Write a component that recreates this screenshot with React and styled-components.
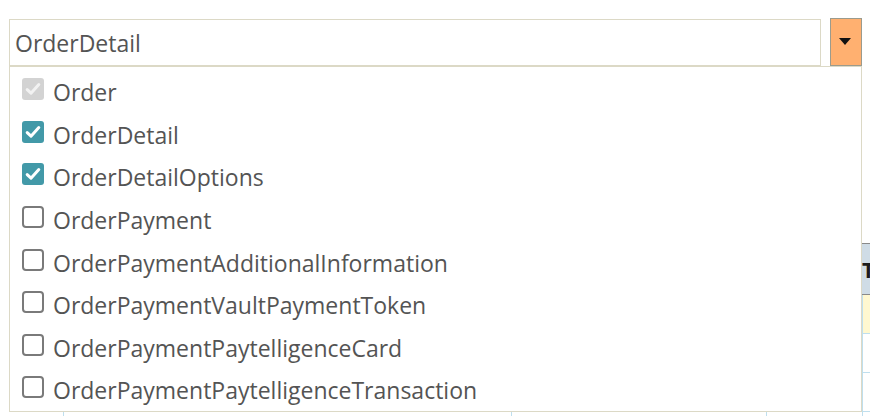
import React from "react";
import styled, { createGlobalStyle } from "styled-components";

const Global = createGlobalStyle`
  html, body { margin: 0; padding: 0; background: #fff; }
  body { font-family: "Open Sans", "Noto Sans", sans-serif; }
`;

const Page = styled.div`
  position: relative;
  width: 870px;
  height: 416px;
  overflow: hidden;
  background: #fff;
`;

const Combo = styled.div`
  display: flex;
  align-items: flex-start;
  gap: 9px;
  padding: 18px 0 0 9px;
`;

const Input = styled.div`
  box-sizing: border-box;
  margin-top: 1px;
  width: 812px;
  height: 47px;
  border: 1px solid #dcd9c6;
  display: flex;
  align-items: center;
  padding-left: 5px;
  font-size: 23px;
  color: #545454;
`;

const Toggle = styled.div`
  box-sizing: border-box;
  width: 32px;
  height: 48px;
  background: #ffb070;
  border: 1px solid #9b9b8d;
  display: flex;
  align-items: center;
  justify-content: center;
  padding-right: 2px;
`;

const Caret = styled.span`
  width: 0;
  height: 0;
  margin-bottom: 2px;
  border-left: 6px solid transparent;
  border-right: 6px solid transparent;
  border-top: 7px solid #111;
`;

const Table = styled.div`
  margin: 177px 0 0 9px;
  width: 1000px;
  display: grid;
  grid-template-columns: 54px 448px 255px 96px 147px;
`;

const HeadCell = styled.div`
  box-sizing: border-box;
  height: 52px;
  background: #cfdce6;
  border-top: 1px solid #8a8a8a;
  border-bottom: 1px solid #8a8a8a;
  display: flex;
  align-items: center;
  padding-left: ${(p) => p.$pad || 0}px;
  font-size: 22px;
  font-weight: 700;
  color: #1c1c1c;
  white-space: nowrap;
`;

const Cell = styled.div`
  box-sizing: border-box;
  height: ${(p) => p.$h}px;
  background: ${(p) => (p.$hl ? "#fff8d0" : "#fff")};
  border-bottom: 1px solid #bfdfee;
  border-left: ${(p) => (p.$first ? "none" : "1px solid #bfdfee")};
`;

const Panel = styled.div`
  position: absolute;
  top: 66px;
  left: 9px;
  box-sizing: border-box;
  width: 853px;
  height: 346px;
  background: #fff;
  border: 1px solid #dcd9c6;
  padding-top: 1px;
  display: flex;
  flex-direction: column;
`;

const Row = styled.label`
  display: flex;
  align-items: center;
  height: 42.57px;
  padding-left: 12px;
  gap: 9px;
  font-size: 23px;
  color: #545454;
`;

const Label = styled.span`
  padding-top: 7px;
  line-height: 1;
  white-space: nowrap;
`;

const Box = styled.span`
  box-sizing: border-box;
  width: 22px;
  height: 22px;
  flex: none;
  border-radius: ${(p) => (p.$state === "off" ? 4 : 3)}px;
  background: ${(p) =>
    p.$state === "on" ? "#4299a8" : p.$state === "disabled" ? "#d3d3d3" : "#fff"};
  border: ${(p) => (p.$state === "off" ? "2px solid #7a7a7a" : "none")};
  display: flex;
  align-items: center;
  justify-content: center;
`;

const Check = ({ color }) => (
  <svg width="16" height="14" viewBox="0 0 16 14">
    <path
      d="M2.2 7.6 L6 11.2 L13.8 2.6"
      fill="none"
      stroke={color}
      strokeWidth="3"
      strokeLinecap="round"
      strokeLinejoin="round"
    />
  </svg>
);

const items = [
  ["Order", "disabled"],
  ["OrderDetail", "on"],
  ["OrderDetailOptions", "on"],
  ["OrderPayment", "off"],
  ["OrderPaymentAdditionalInformation", "off"],
  ["OrderPaymentVaultPaymentToken", "off"],
  ["OrderPaymentPaytelligenceCard", "off"],
  ["OrderPaymentPaytelligenceTransaction", "off"],
];

const heads = ["", "", "", "", "Type"];
const bodyRows = [{ h: 39, hl: true }, { h: 39 }, { h: 39 }, { h: 39 }];

export default function App() {
  return (
    <Page>
      <Global />
      <Combo>
        <Input>OrderDetail</Input>
        <Toggle>
          <Caret />
        </Toggle>
      </Combo>
      <Table>
        {heads.map((h, i) => (
          <HeadCell key={"h" + i} $pad={i === 4 ? 0 : 4}>
            {h}
          </HeadCell>
        ))}
        {bodyRows.map((r, ri) =>
          heads.map((_, ci) => (
            <Cell key={ri + "-" + ci} $h={r.h} $hl={r.hl} $first={ci === 0} />
          ))
        )}
      </Table>
      <Panel>
        {items.map(([name, state]) => (
          <Row key={name}>
            <Box $state={state}>
              {state !== "off" && (
                <Check color={state === "on" ? "#fff" : "#f2f2f2"} />
              )}
            </Box>
            <Label>{name}</Label>
          </Row>
        ))}
      </Panel>
    </Page>
  );
}
